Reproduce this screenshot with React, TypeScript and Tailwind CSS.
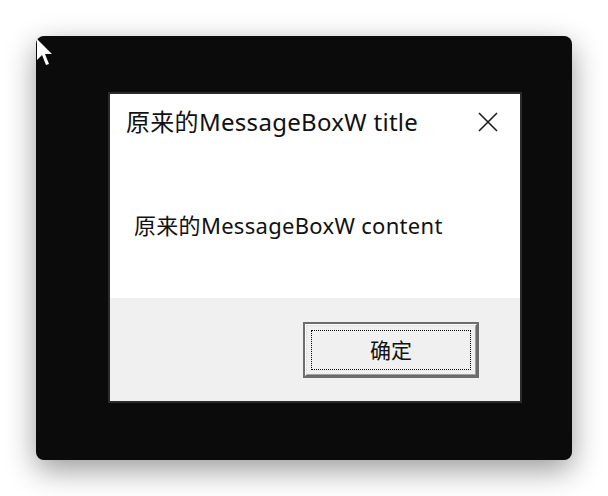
import React from "react";

export default function App() {
  const font = { fontFamily: '"Noto Sans", "Noto Sans CJK SC", sans-serif' };
  return (
    <div className="w-[608px] h-[496px] bg-white pt-[36px] pl-[36px] overflow-hidden" style={font}>
      <div className="relative w-[536px] h-[424px] bg-[#0b0b0b] rounded-[8px] shadow-[0_10px_30px_rgba(0,0,0,0.4)] pl-[72px] pt-[56px]">
        <div className="w-[414px] h-[311px] border-2 border-[#2b2b2b] flex flex-col">
          <div className="h-[204px] bg-white flex flex-col">
            <div className="flex items-start justify-between pl-[16px] pr-[22px] pt-[12px]">
              <span className="text-[24px] leading-[32px] tracking-[0.3px] text-[#111]">原来的MessageBoxW title</span>
              <svg width="20" height="20" viewBox="0 0 20 20" className="mt-[6px]">
                <path d="M1 1 L19 19 M19 1 L1 19" stroke="#1a1a1a" strokeWidth="1.6" fill="none" />
              </svg>
            </div>
            <div className="pl-[24px] pt-[72px]">
              <span className="text-[22px] leading-[30px] tracking-[0.3px] text-[#111]">原来的MessageBoxW content</span>
            </div>
          </div>
          <div className="flex-1 bg-[#f0f0f0] flex justify-end items-start pr-[41px] pt-[24px]">
            <div className="w-[176px] h-[56px] border-2 border-[#6d6d6d]">
              <div className="w-full h-full border border-t-white border-l-white border-b-[#696969] border-r-[#696969]">
                <div className="w-full h-full border border-t-[#e3e3e3] border-l-[#e3e3e3] border-b-[#a0a0a0] border-r-[#a0a0a0] bg-[#f0f0f0] p-[4px]">
                  <div className="w-full h-full border border-dotted border-black flex items-center justify-center pb-[3px]">
                    <span className="text-[21px] leading-[24px] text-[#111]" style={{ fontFamily: '"Noto Sans CJK SC", sans-serif' }}>确定</span>
                  </div>
                </div>
              </div>
            </div>
          </div>
        </div>
        <svg className="absolute left-[0px] top-[2px]" width="18" height="32" viewBox="0 0 18 32">
          <path d="M1 1 L1 22 L6 17 L10 27 L13 26 L9 16 L16 16 Z" fill="#ffffff" />
        </svg>
      </div>
    </div>
  );
}
